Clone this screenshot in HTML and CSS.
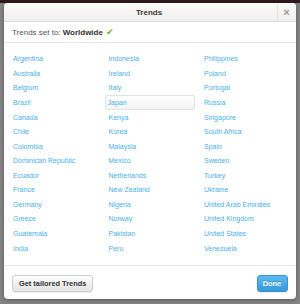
FILE: index.html
```html
<!DOCTYPE html>
<html>
<head>
<meta charset="utf-8">
<link rel="stylesheet" href="styles.css">
</head>
<body>
<div class="topstrip"></div>
<div class="dialog">
  <div class="header">
    <div class="title">Trends</div>
    <div class="close">&#215;</div>
  </div>
  <div class="current">
    <span class="label">Trends set to:</span> <b>Worldwide</b> <span class="check">&#10004;</span>
  </div>
  <div class="list">
    <a>Argentina</a><a>Indonesia</a><a>Philippines</a>
    <a>Australia</a><a>Ireland</a><a>Poland</a>
    <a>Belgium</a><a>Italy</a><a>Portugal</a>
    <a>Brazil</a><a class="sel">Japan</a><a>Russia</a>
    <a>Canada</a><a>Kenya</a><a>Singapore</a>
    <a>Chile</a><a>Korea</a><a>South Africa</a>
    <a>Colombia</a><a>Malaysia</a><a>Spain</a>
    <a>Dominican Republic</a><a>Mexico</a><a>Sweden</a>
    <a>Ecuador</a><a>Netherlands</a><a>Turkey</a>
    <a>France</a><a>New Zealand</a><a>Ukraine</a>
    <a>Germany</a><a>Nigeria</a><a>United Arab Emirates</a>
    <a>Greece</a><a>Norway</a><a>United Kingdom</a>
    <a>Guatemala</a><a>Pakistan</a><a>United States</a>
    <a>India</a><a>Peru</a><a>Venezuela</a>
  </div>
  <div class="footer">
    <button class="btn">Get tailored Trends</button>
    <button class="btn primary">Done</button>
  </div>
</div>
</body>
</html>
```
FILE: styles.css
```css
html, body {
  margin: 0;
  padding: 0;
}
body {
  width: 300px;
  height: 304px;
  overflow: hidden;
  background: #858585;
  font-family: "Liberation Sans", Arial, sans-serif;
  position: relative;
}
.topstrip {
  position: absolute;
  left: 0;
  top: 0;
  width: 300px;
  height: 3px;
  background: #2e1c1c;
}
.dialog {
  position: relative;
  margin: 3px 0 0 3.5px;
  width: 292px;
  height: 296px;
  background: #fff;
  border-radius: 4px;
  box-shadow: 0 1px 4px rgba(0,0,0,0.35);
  display: flex;
  flex-direction: column;
  overflow: hidden;
}
.header {
  height: 18px;
  border-bottom: 1px solid #dcdcdc;
  background: linear-gradient(#fbfbfb, #efefef);
  display: flex;
  align-items: center;
  position: relative;
}
.title {
  flex: 1;
  text-align: center;
  font-weight: bold;
  font-size: 8px;
  color: #3a3a3a;
  padding-left: 18px;
}
.close {
  width: 18px;
  height: 18px;
  border-left: 1px solid #e4e4e4;
  display: flex;
  align-items: center;
  justify-content: center;
  color: #999;
  font-size: 11px;
  font-weight: bold;
}
.current {
  height: 20px;
  border-bottom: 1px solid #e6e6e6;
  display: flex;
  align-items: center;
  gap: 2px;
  padding-left: 8.5px;
  font-size: 8px;
  color: #555;
}
.current b {
  color: #333;
}
.check {
  color: #72b33a;
  font-size: 8.5px;
  margin-left: 1px;
}
.list {
  flex: 1;
  display: grid;
  grid-template-columns: repeat(3, 90px);
  grid-auto-rows: 14.57px;
  column-gap: 5.5px;
  align-content: start;
  padding: 8.5px 0 0 5.5px;
}
.list a {
  display: flex;
  align-items: center;
  padding-left: 3px;
  font-size: 7px;
  color: #4ab0e8;
  white-space: nowrap;
  box-sizing: border-box;
  border: 1px solid transparent;
}
.list a.sel {
  border: 1px solid #e3e3e3;
  border-radius: 2px;
  padding-left: 2px;
  background: linear-gradient(#ffffff, #f4f4f4);
}
.footer {
  height: 34px;
  border-top: 1px solid #e6e6e6;
  display: flex;
  align-items: center;
  justify-content: space-between;
  padding: 0 8px 0 8.5px;
  box-sizing: border-box;
}
.btn {
  height: 17px;
  margin-top: 2px;
  padding: 0 6px;
  border: 1px solid #cdcdcd;
  border-radius: 3px;
  background: linear-gradient(#ffffff, #e4e4e4);
  font-family: "Liberation Sans", Arial, sans-serif;
  font-weight: bold;
  font-size: 7.4px;
  color: #333;
  box-shadow: 0 1px 1px rgba(0,0,0,0.08);
}
.btn.primary {
  width: 31px;
  padding: 0;
  border-color: #3a8fcc;
  background: linear-gradient(#5dbcee, #3399da);
  color: #fff;
  text-shadow: 0 -1px 0 rgba(0,0,0,0.2);
}
```
